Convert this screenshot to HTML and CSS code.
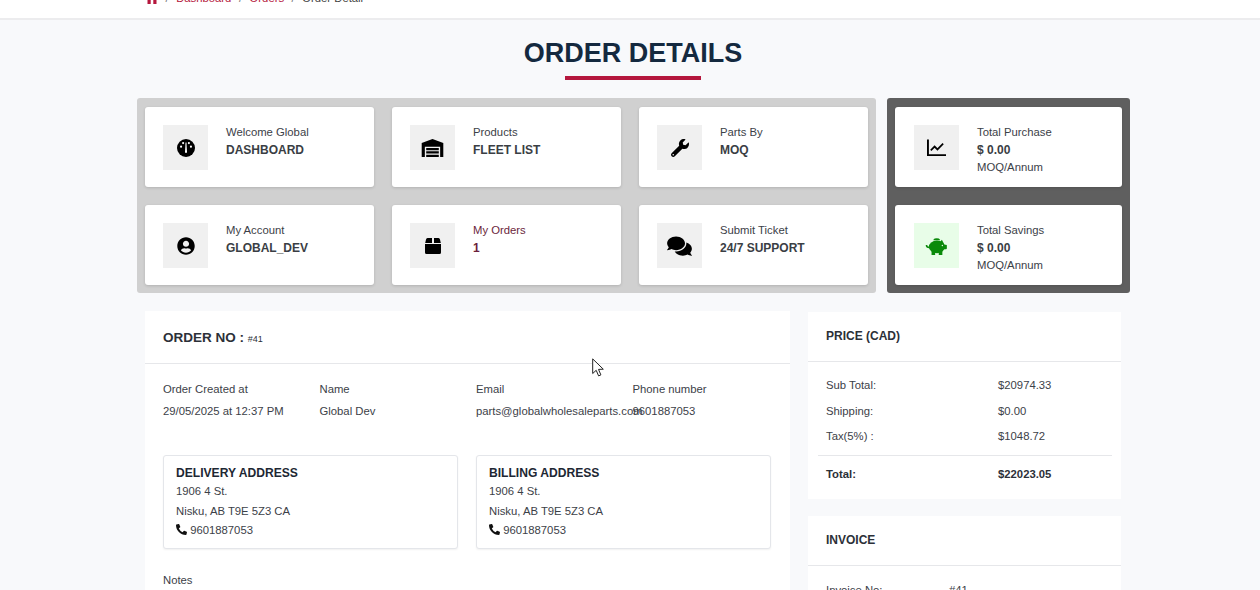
FILE: index.html
```html
<!DOCTYPE html>
<html lang="en">
<head>
    <meta charset="UTF-8">
    <meta name="viewport" content="width=device-width, initial-scale=1.0">
    <title>Order Details</title>
    <link rel="stylesheet" href="styles.css">
</head>
<body>
    <div class="breadcrumb-bar">
        <div class="breadcrumb">
            <svg class="home-icon" viewBox="0 0 12 12"><path d="M6 0 0 6h1.500v6h3.200V8h2.600v4h3.200V6H12z"/></svg>
            <span class="crumb-sep">/</span>
            <span class="crumb-link">Dashboard</span>
            <span class="crumb-sep">/</span>
            <span class="crumb-link">Orders</span>
            <span class="crumb-sep">/</span>
            <span>Order Detail</span>
        </div>
    </div>

    <h1 class="page-title">ORDER DETAILS</h1>
    <div class="title-line"></div>

    <div class="stats-row">
        <div class="stats-panel stats-light">
            <div class="stat-card">
                <div class="stat-icon">
                    <svg viewBox="0 0 20 20">
                        <circle cx="10" cy="10" r="10" fill="#000"/>
                        <circle cx="4.500" cy="8.500" r="1.200" fill="#fff"/>
                        <circle cx="6.800" cy="4.500" r="1.200" fill="#fff"/>
                        <circle cx="13.200" cy="4.500" r="1.200" fill="#fff"/>
                        <circle cx="15.500" cy="8.500" r="1.200" fill="#fff"/>
                        <path d="M9.500 4h1l.6 10.500a1.100 1.100 0 1 1-2.200 0z" fill="#fff"/>
                    </svg>
                </div>
                <div class="stat-text">
                    <div class="stat-label">Welcome Global</div>
                    <div class="stat-value">DASHBOARD</div>
                </div>
            </div>
            <div class="stat-card">
                <div class="stat-icon">
                    <svg class="icon-wide" viewBox="0 0 24 20">
                        <path d="M12 0 0 4.500V20h3.500V8.500h17V20H24V4.500z" fill="#000"/>
                        <path d="M5 10h14v2.400H5zM5 13.700h14v2.400H5zM5 17.500h14V20H5z" fill="#000"/>
                    </svg>
                </div>
                <div class="stat-text">
                    <div class="stat-label">Products</div>
                    <div class="stat-value">FLEET LIST</div>
                </div>
            </div>
            <div class="stat-card">
                <div class="stat-icon">
                    <svg viewBox="0 0 512 512"><path d="M507.730 109.100c-2.240-9.030-13.540-12.090-20.120-5.510l-74.360 74.360-67.880-11.310-11.310-67.880 74.360-74.360c6.620-6.620 3.430-17.900-5.660-20.160-47.380-11.740-99.550.91-136.580 37.930-39.640 39.640-50.550 97.100-34.050 147.200L18.740 402.760c-24.990 24.990-24.990 65.510 0 90.500 24.990 24.990 65.510 24.990 90.500 0l213.210-213.210c50.120 16.710 107.470 5.680 147.370-34.220 37.070-37.070 49.700-89.320 37.910-136.730zM64 472c-13.250 0-24-10.750-24-24 0-13.260 10.750-24 24-24s24 10.740 24 24c0 13.250-10.750 24-24 24z"/></svg>
                </div>
                <div class="stat-text">
                    <div class="stat-label">Parts By</div>
                    <div class="stat-value">MOQ</div>
                </div>
            </div>
            <div class="stat-card">
                <div class="stat-icon">
                    <svg viewBox="0 0 496 512"><path d="M248 8C111 8 0 119 0 256s111 248 248 248 248-111 248-248S385 8 248 8zm0 96c48.600 0 88 39.400 88 88s-39.400 88-88 88-88-39.400-88-88 39.400-88 88-88zm0 344c-58.700 0-111.300-26.600-146.500-68.200 18.800-35.400 55.600-59.800 98.500-59.800 2.400 0 4.800.4 7.100 1.100 13 4.200 26.600 6.900 40.900 6.900 14.300 0 28-2.700 40.900-6.900 2.300-.7 4.700-1.100 7.100-1.100 42.900 0 79.700 24.400 98.500 59.800C359.300 421.400 306.700 448 248 448z"/></svg>
                </div>
                <div class="stat-text">
                    <div class="stat-label">My Account</div>
                    <div class="stat-value">GLOBAL_DEV</div>
                </div>
            </div>
            <div class="stat-card">
                <div class="stat-icon">
                    <svg class="icon-box" viewBox="0 0 16 16"><path d="M2.500 0H7v5H.2L1 1.500A2 2 0 0 1 2.500 0zM9 0h4.500A2 2 0 0 1 15 1.500l.8 3.500H9zM0 6h16v8.500a1.500 1.500 0 0 1-1.500 1.500h-13A1.500 1.500 0 0 1 0 14.500z"/></svg>
                </div>
                <div class="stat-text stat-orders">
                    <div class="stat-label">My Orders</div>
                    <div class="stat-value">1</div>
                </div>
            </div>
            <div class="stat-card">
                <div class="stat-icon">
                    <svg class="icon-comments" viewBox="0 0 576 512"><path d="M416 192c0-88.400-93.100-160-208-160S0 103.600 0 192c0 34.300 14.100 65.900 38 92-13.400 30.200-35.500 54.200-35.800 54.500-2.200 2.300-2.800 5.700-1.500 8.700S4.800 352 8 352c36.600 0 66.900-12.300 88.700-25 32.200 15.700 70.300 25 111.300 25 114.900 0 208-71.600 208-160zm122 220c23.900-26 38-57.700 38-92 0-66.900-53.500-124.200-129.300-148.100.9 6.600 1.300 13.300 1.300 20.100 0 105.900-107.700 192-240 192-10.800 0-21.300-.8-31.700-1.900C207.800 439.600 281.800 480 368 480c41 0 79.100-9.200 111.300-25 21.800 12.700 52.100 25 88.700 25 3.200 0 6.100-1.900 7.300-4.800 1.300-2.900.7-6.300-1.500-8.700-.3-.3-22.400-24.200-35.800-54.500z"/></svg>
                </div>
                <div class="stat-text">
                    <div class="stat-label">Submit Ticket</div>
                    <div class="stat-value">24/7 SUPPORT</div>
                </div>
            </div>
        </div>

        <div class="stats-panel stats-dark">
            <div class="stat-card">
                <div class="stat-icon">
                    <svg class="icon-chart" viewBox="0 0 20 18" fill="none" stroke="#000">
                        <path d="M1 0v16.500h19" stroke-width="2"/>
                        <path d="M4 11.500l4-4 3 3 6-6" stroke-width="1.800"/>
                    </svg>
                </div>
                <div class="stat-text">
                    <div class="stat-label">Total Purchase</div>
                    <div class="stat-value">$ 0.00</div>
                    <div class="stat-label">MOQ/Annum</div>
                </div>
            </div>
            <div class="stat-card">
                <div class="stat-icon icon-green">
                    <svg class="icon-wide" viewBox="0 0 24 20" fill="#0b8a0b">
                        <ellipse cx="12.500" cy="11" rx="9" ry="7"/>
                        <path d="M6.500 16h4v4h-4zM14.500 16h4v4h-4zM18 3l2.500 5-5-2z"/>
                        <path d="M8.500 3a4 2.500 0 0 1 7.500 0v.6H8.500z"/>
                        <rect x="20" y="8.500" width="3.500" height="5" rx="1"/>
                        <path d="M0 9c0 2.500 1.500 3.500 4 3.500v-1.800C2.600 10.700 1.800 10.200 1.800 9z"/>
                        <circle cx="18.500" cy="9.500" r=".8" fill="#e8fde8"/>
                    </svg>
                </div>
                <div class="stat-text">
                    <div class="stat-label">Total Savings</div>
                    <div class="stat-value">$ 0.00</div>
                    <div class="stat-label">MOQ/Annum</div>
                </div>
            </div>
        </div>
    </div>

    <div class="details-row">
        <div class="order-card">
            <div class="card-head order-head">ORDER NO : <small>#41</small></div>
            <div class="order-body">
                <div class="info-grid">
                    <div>Order Created at</div>
                    <div>Name</div>
                    <div>Email</div>
                    <div>Phone number</div>
                    <div>29/05/2025 at 12:37 PM</div>
                    <div>Global Dev</div>
                    <div>parts@globalwholesaleparts.com</div>
                    <div>9601887053</div>
                </div>
                <div class="address-row">
                    <div class="address-box">
                        <h4>DELIVERY ADDRESS</h4>
                        <p>1906 4 St.</p>
                        <p>Nisku, AB T9E 5Z3 CA</p>
                        <p><svg class="phone-icon" viewBox="0 0 512 512"><path d="M497.390 361.800l-112-48a24 24 0 0 0-28 6.900l-49.600 60.600A370.660 370.660 0 0 1 130.600 204.110l60.600-49.600a23.940 23.940 0 0 0 6.900-28l-48-112A24.160 24.160 0 0 0 122.600.61l-104 24A24 24 0 0 0 0 48c0 256.500 207.900 464 464 464a24 24 0 0 0 23.400-18.600l24-104a24.290 24.290 0 0 0-14.010-27.600z"/></svg> 9601887053</p>
                    </div>
                    <div class="address-box">
                        <h4>BILLING ADDRESS</h4>
                        <p>1906 4 St.</p>
                        <p>Nisku, AB T9E 5Z3 CA</p>
                        <p><svg class="phone-icon" viewBox="0 0 512 512"><path d="M497.390 361.800l-112-48a24 24 0 0 0-28 6.900l-49.600 60.600A370.660 370.660 0 0 1 130.600 204.110l60.600-49.600a23.940 23.940 0 0 0 6.900-28l-48-112A24.160 24.160 0 0 0 122.600.61l-104 24A24 24 0 0 0 0 48c0 256.500 207.900 464 464 464a24 24 0 0 0 23.400-18.600l24-104a24.290 24.290 0 0 0-14.010-27.600z"/></svg> 9601887053</p>
                    </div>
                </div>
                <div class="notes-label">Notes</div>
            </div>
        </div>

        <div class="side-col">
            <div class="side-card">
                <div class="card-head side-head">PRICE (CAD)</div>
                <div class="price-body">
                    <div class="price-row"><span>Sub Total:</span><span>$20974.33</span></div>
                    <div class="price-row"><span>Shipping:</span><span>$0.00</span></div>
                    <div class="price-row"><span>Tax(5%) :</span><span>$1048.72</span></div>
                    <div class="price-row price-total"><span>Total:</span><span>$22023.05</span></div>
                </div>
            </div>
            <div class="side-card">
                <div class="card-head side-head">INVOICE</div>
                <div class="invoice-body">
                    <div class="invoice-row"><span>Invoice No:</span><span>#41</span></div>
                </div>
            </div>
        </div>
    </div>

    <svg class="mouse-cursor" viewBox="0 0 13 19"><path d="M.7.9v14.600l3.500-3.200 2.400 5.600 2.300-1-2.400-5.500 4.800-.2z" fill="#fff" stroke="#222" stroke-width="1"/></svg>
</body>
</html>
```

FILE: styles.css
```css
html {
    height: 100%;
    overflow: hidden;
}
body {
    font-family: 'Liberation Sans', Arial, sans-serif;
    font-size: 11.3px;
    color: #3c4148;
    background-color: #f8f9fb;
    margin: 0;
    height: 100%;
    overflow: hidden;
    position: relative;
}
.breadcrumb-bar {
    height: 18px;
    background-color: white;
    border-bottom: 2px solid #ececee;
    overflow: hidden;
}
.breadcrumb {
    display: flex;
    align-items: center;
    gap: 6.500px;
    margin-top: -9px;
    padding-left: 146px;
    height: 14px;
    color: #444;
}
.home-icon {
    width: 12px;
    height: 12px;
    fill: #b5173d;
}
.crumb-link {
    color: #b5173d;
}
.crumb-sep {
    color: #777;
    margin: 0 1px;
}
.page-title {
    font-size: 27px;
    line-height: 32px;
    font-weight: bold;
    color: #14293f;
    text-align: center;
    margin: 17px 0 0;
    padding-left: 6px;
}
.title-line {
    width: 136px;
    height: 4px;
    background-color: #b5173d;
    margin: 7px 0 0 565px;
}
.stats-row {
    display: flex;
    gap: 11px;
    margin: 18px 0 0 137px;
}
.stats-panel {
    display: grid;
    gap: 18px;
    padding: 9px 8px 8px;
    border-radius: 3px;
}
.stats-light {
    grid-template-columns: repeat(3, 229px);
    background-color: #d0d0d0;
}
.stats-dark {
    grid-template-columns: 227px;
    background-color: #5f5f5f;
}
.stat-card {
    display: flex;
    gap: 18px;
    height: 80px;
    box-sizing: border-box;
    padding: 16px 18px;
    background-color: white;
    border-radius: 3px;
    box-shadow: 0 1px 3px rgba(0, 0, 0, 0.15);
}
.stats-dark .stat-card {
    padding-left: 19px;
}
.stat-icon {
    display: flex;
    align-items: center;
    justify-content: center;
    flex: none;
    width: 45px;
    height: 45px;
    margin-top: 2px;
    background-color: #f0f0f0;
}
.stat-icon svg {
    width: 18px;
    height: 18px;
}
.stat-icon .icon-wide {
    width: 23px;
}
.stat-icon .icon-chart {
    width: 19px;
}
.stat-icon .icon-box {
    width: 16px;
    height: 16px;
}
.stat-icon .icon-comments {
    width: 25px;
    height: 22px;
}
.icon-green {
    background-color: #e8fde8;
}
.stat-text {
    margin-top: 1px;
}
.stat-label {
    line-height: 17px;
}
.stat-value {
    font-size: 12px;
    font-weight: bold;
    line-height: 18px;
    color: #3a3e44;
}
.stat-orders .stat-label,
.stat-orders .stat-value {
    color: #6b1f3c;
}
.details-row {
    display: flex;
    gap: 18px;
    margin: 18px 0 0 145px;
}
.order-card {
    width: 645px;
    background-color: white;
}
.card-head {
    font-weight: bold;
    color: #2c3038;
    border-bottom: 1px solid #e6e7ea;
    box-sizing: border-box;
}
.order-head {
    height: 53px;
    line-height: 53px;
    padding-left: 18px;
    font-size: 13.500px;
}
.order-head small {
    font-size: 9px;
    font-weight: normal;
}
.order-body {
    padding: 0 18px;
}
.info-grid {
    display: grid;
    grid-template-columns: repeat(4, 156.500px);
    row-gap: 8px;
    padding-top: 18px;
    line-height: 14px;
    white-space: nowrap;
}
.address-row {
    display: flex;
    gap: 18px;
    margin-top: 37px;
}
.address-box {
    width: 295px;
    height: 94px;
    box-sizing: border-box;
    padding: 9px 12px;
    background-color: white;
    border: 1px solid #e4e6ea;
    border-radius: 3px;
    box-shadow: 0 1px 2px rgba(0, 0, 0, 0.06);
}
.address-box h4 {
    font-size: 12.100px;
    line-height: 16px;
    color: #1d2733;
    margin: 0 0 1px;
}
.address-box p {
    line-height: 19.500px;
    margin: 0;
}
.phone-icon {
    width: 11px;
    height: 11px;
    vertical-align: -1px;
    fill: #111;
}
.notes-label {
    margin-top: 25px;
}
.side-col {
    display: flex;
    flex-direction: column;
    gap: 17px;
    width: 313px;
    margin-top: 1px;
}
.side-card {
    background-color: white;
}
.side-head {
    height: 50px;
    line-height: 48px;
    padding-left: 18px;
    font-size: 12px;
}
.price-body {
    padding: 16px 9px 0 10px;
    height: 137px;
    box-sizing: border-box;
}
.price-row {
    display: flex;
    line-height: 14px;
    margin-bottom: 11.500px;
    padding-left: 8px;
}
.price-row span:first-child {
    width: 172px;
}
.price-total {
    border-top: 1px solid #e6e7ea;
    margin-top: 11px;
    padding-top: 11px;
    font-weight: bold;
    color: #2c3038;
}
.invoice-body {
    padding: 17px 18px 0;
}
.invoice-row {
    display: flex;
    line-height: 14px;
}
.invoice-row span:first-child {
    width: 123px;
}
.mouse-cursor {
    position: absolute;
    left: 592px;
    top: 358px;
    width: 13px;
    height: 19px;
}
```
